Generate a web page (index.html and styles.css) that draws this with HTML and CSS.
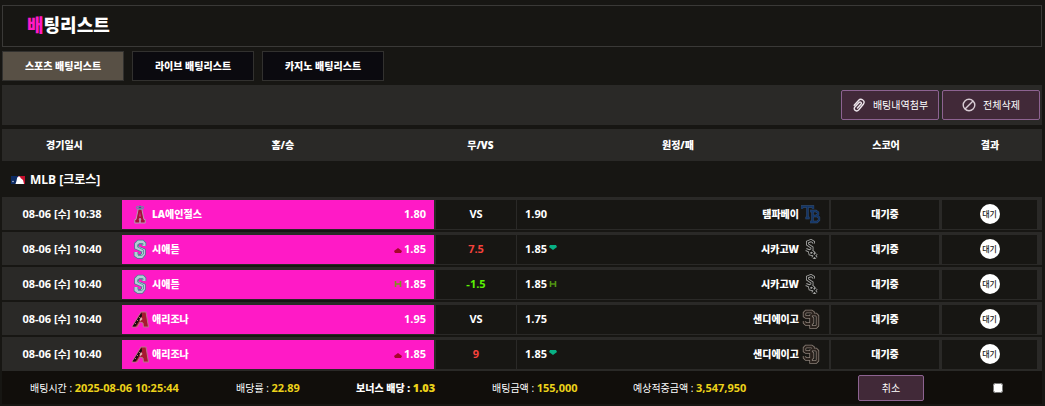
FILE: index.html
```html
<!DOCTYPE html>
<html lang="ko">
<head>
<meta charset="utf-8">
<title>배팅리스트</title>
<link rel="stylesheet" href="styles.css">
</head>
<body>
<svg class="defs" aria-hidden="true">
  <symbol id="angels" viewBox="0 0 20 20">
    <path d="M8.200 5h3.600l2.200 10.500h1.200V19h-5v-3h.6l-.3-1.500h-1L9.200 16h.6v3h-5v-3.500H6z" fill="#a31238" stroke="#b79bb5" stroke-width="1"/>
    <path d="M10 8 9.300 12.500h1.400z" fill="#ff1ac6"/>
    <path d="M8 5 10 1l2 4z" fill="#3f5f80"/>
    <ellipse cx="10" cy="3.600" rx="3.600" ry="1.300" fill="none" stroke="#6d8aa5" stroke-width="1.100"/>
  </symbol>
  <symbol id="mariners" viewBox="0 0 20 20">
    <path d="M14 7V4.500L12.500 3h-4L6.500 5v3.500l7 3V15l-2 2.500H8L6 16v-3" fill="none" stroke="#4a7d92" stroke-width="4.600"/>
    <path d="M14 7V4.500L12.500 3h-4L6.500 5v3.500l7 3V15l-2 2.500H8L6 16v-3" fill="none" stroke="#b4cdd4" stroke-width="3"/>
    <path d="M13 6V4.500h-4L7.500 6v2l6 3V15l-2 1.500H8" fill="none" stroke="#51889a" stroke-width=".8"/>
  </symbol>
  <symbol id="dbacks" viewBox="0 0 20 20">
    <path d="M2 18 11 3h5l2.500 15h-5L13 14l-3-1-3 5z" fill="#a71930" stroke="#b87988" stroke-width="1"/>
    <path d="M2.500 17.500 11.500 3.500 12 7l-6.500 10.500z" fill="#160b12"/>
    <path d="m11 8 1.500 2-2 2-1-1z" fill="#e3b8b5"/>
    <path d="m5 14 1 1m1-4 1 1m1-4 1 1" stroke="#bd6a72" stroke-width="1"/>
  </symbol>
  <symbol id="rays" viewBox="0 0 20 20">
    <path d="M1 5V2.500h11V5M6.500 3v11M4.500 14h4M9 7h6l2 1.500v2L15 12h-4 5l2 1.500v2.500L16 18H9m2.500-11v11" fill="none" stroke="#3b5374" stroke-width="2.300"/>
    <path d="M1 5V2.500h11V5M6.500 3v11M4.500 14h4M9 7h6l2 1.500v2L15 12h-4 5l2 1.500v2.500L16 18H9m2.500-11v11" fill="none" stroke="#123466" stroke-width="1.600"/>
  </symbol>
  <symbol id="whitesox" viewBox="0 0 20 20">
    <path d="M12.500 4.500V3L10 1.500 6.500 3v2.500L11 8.500v2L8.500 12 5 10.500M8.500 13l2.500-1 1.500 1.500-1.500 2-2-.5zM11.500 15l4 4m0-4.500-4 4.500" fill="none" stroke="#a3a3a1" stroke-width="3"/>
    <path d="M12.500 4.500V3L10 1.500 6.500 3v2.500L11 8.500v2L8.500 12 5 10.500M8.500 13l2.500-1 1.500 1.500-1.500 2-2-.5zM11.500 15l4 4m0-4.500-4 4.500" fill="none" stroke="#11110f" stroke-width="1.200"/>
  </symbol>
  <symbol id="padres" viewBox="0 0 20 20">
    <path d="M12 6V3.500L10.500 2.500H5L3.500 4v3L5 8h5l1.500 1.500v4L10 15H5l-1.500-1.500V12M10 5.500h5L16.500 7v9.500L15 18h-5V5.500" fill="none" stroke="#8c8078" stroke-width="3.400"/>
    <path d="M12 6V3.500L10.500 2.500H5L3.500 4v3L5 8h5l1.500 1.500v4L10 15H5l-1.500-1.500V12M10 5.500h5L16.500 7v9.500L15 18h-5V5.500" fill="none" stroke="#29211c" stroke-width="1.800"/>
  </symbol>
</svg>

<main class="page">
  <header class="title-box"><h1 class="title"><span class="accent">배</span>팅리스트</h1></header>

  <nav class="tabs">
    <button type="button" class="tab tab-active">스포츠 배팅리스트</button>
    <button type="button" class="tab">라이브 배팅리스트</button>
    <button type="button" class="tab">카지노 배팅리스트</button>
  </nav>

  <div class="toolbar">
    <button type="button" class="action">
      <svg class="action-icon" viewBox="0 0 14 14"><path d="M2.200 7.200 6.500 2.500C9-.2 13.600 2.600 11.500 6L6.800 11.800C4.700 14.200.9 12 2.700 9.200L7 4.500c1.300-1.200 3 .1 2.100 1.500L5.500 10" fill="none" stroke="#eee6ec" stroke-width="1.400" stroke-linecap="round"/></svg>
      배팅내역첨부
    </button>
    <button type="button" class="action">
      <svg class="action-icon" viewBox="0 0 14 14"><circle cx="7" cy="7" r="5.800" fill="none" stroke="#d8ccd4" stroke-width="1.400"/><path d="m3 11 8-8" stroke="#d8ccd4" stroke-width="1.400"/></svg>
      전체삭제
    </button>
  </div>

  <table class="bets">
    <thead>
      <tr class="head-row"><th>경기일시</th><th>홈/승</th><th>무/VS</th><th>원정/패</th><th>스코어</th><th>결과</th></tr>
    </thead>
    <tbody>
      <tr class="league-row"><th colspan="6" class="league">
        <svg class="league-logo" viewBox="0 0 16 10"><path d="M1 1h8l-2 8H1z" fill="#0c2a62"/><path d="M8 1h7v8h-2z" fill="#c8102e"/><path d="M7 3.500C7.500.8 10.500 1 10.500 3l2.500 2 1 4H5.500l1-3z" fill="#fff"/><circle cx="3" cy="6.500" r=".8" fill="#b9c4d8"/></svg>
        MLB [크로스]</th></tr>
      <tr class="bet-row">
        <td class="date">08-06 [<span class="ko">수</span>] 10:38</td>
        <td class="home"><svg class="logo"><use href="#angels"/></svg><span class="team">LA에인절스</span><span class="odds">1.80</span></td>
        <td class="line">VS</td>
        <td class="away"><span>1.90</span><span class="team">탬파베이</span><svg class="logo"><use href="#rays"/></svg></td>
        <td class="score">대기중</td><td class="result"><span class="badge">대기</span></td>
      </tr>
      <tr class="bet-row">
        <td class="date">08-06 [<span class="ko">수</span>] 10:40</td>
        <td class="home"><svg class="logo"><use href="#mariners"/></svg><span class="team">시애틀</span><svg class="mark" viewBox="0 0 8 8"><path d="m4 3 4 3-1 2H1L0 6z" fill="#a5062b"/></svg><span class="odds">1.85</span></td>
        <td class="line over">7.5</td>
        <td class="away"><span>1.85</span><svg class="mark" viewBox="0 0 8 8"><path d="M1 0h6l1 2-4 3-4-3z" fill="#08b184"/></svg><span class="team">시카고W</span><svg class="logo"><use href="#whitesox"/></svg></td>
        <td class="score">대기중</td><td class="result"><span class="badge">대기</span></td>
      </tr>
      <tr class="bet-row">
        <td class="date">08-06 [<span class="ko">수</span>] 10:40</td>
        <td class="home"><svg class="logo"><use href="#mariners"/></svg><span class="team">시애틀</span><svg class="mark" viewBox="0 0 8 8"><path d="M1.500 1v6M6.500 1v6M2 4h4" stroke="#7b961e" stroke-width="1.600"/></svg><span class="odds">1.85</span></td>
        <td class="line handicap">-1.5</td>
        <td class="away"><span>1.85</span><svg class="mark" viewBox="0 0 8 8"><path d="M1.500 1v6M6.500 1v6M2 4h4" stroke="#519712" stroke-width="1.600"/></svg><span class="team">시카고W</span><svg class="logo"><use href="#whitesox"/></svg></td>
        <td class="score">대기중</td><td class="result"><span class="badge">대기</span></td>
      </tr>
      <tr class="bet-row">
        <td class="date">08-06 [<span class="ko">수</span>] 10:40</td>
        <td class="home"><svg class="logo"><use href="#dbacks"/></svg><span class="team">애리조나</span><span class="odds">1.95</span></td>
        <td class="line">VS</td>
        <td class="away"><span>1.75</span><span class="team">샌디에이고</span><svg class="logo"><use href="#padres"/></svg></td>
        <td class="score">대기중</td><td class="result"><span class="badge">대기</span></td>
      </tr>
      <tr class="bet-row">
        <td class="date">08-06 [<span class="ko">수</span>] 10:40</td>
        <td class="home"><svg class="logo"><use href="#dbacks"/></svg><span class="team">애리조나</span><svg class="mark" viewBox="0 0 8 8"><path d="m4 3 4 3-1 2H1L0 6z" fill="#a5062b"/></svg><span class="odds">1.85</span></td>
        <td class="line over">9</td>
        <td class="away"><span>1.85</span><svg class="mark" viewBox="0 0 8 8"><path d="M1 0h6l1 2-4 3-4-3z" fill="#08b184"/></svg><span class="team">샌디에이고</span><svg class="logo"><use href="#padres"/></svg></td>
        <td class="score">대기중</td><td class="result"><span class="badge">대기</span></td>
      </tr>
    </tbody>
  </table>

  <footer class="summary">
    <span>배팅시간 : <b class="value">2025-08-06 10:25:44</b></span>
    <span>배당률 : <b class="value">22.89</b></span>
    <span class="strong">보너스 배당 : <b class="value">1.03</b></span>
    <span>배팅금액 : <b class="value">155,000</b></span>
    <span>예상적중금액 : <b class="value">3,547,950</b></span>
    <span class="center"><button type="button" class="cancel">취소</button></span>
    <span class="center"><input type="checkbox" class="pick" aria-label="선택"></span>
  </footer>
</main>
</body>
</html>
```
FILE: styles.css
```css
* { box-sizing: border-box; }

body {
  margin: 0;
  background: #171613;
  color: #fff;
  font: 10px/16px "Open Sans", "Noto Sans CJK KR", sans-serif;
}

button { font: inherit; color: inherit; cursor: pointer; }

.defs { display: none; }

.page {
  display: flex;
  flex-direction: column;
  gap: 4px;
  padding: 5px 3px 2px 2px;
}

.title-box {
  border: 1px solid #3a3937;
  padding: 7px 24px 9px;
}

.title {
  margin: 0;
  font-size: 18px;
  line-height: 24px;
  font-weight: 900;
}

.accent { color: #ff1ac6; }

.tabs { display: flex; gap: 8px; }

.tab {
  width: 122px;
  height: 30px;
  padding: 0;
  border: 1px solid #32312f;
  background: #0b0a0f;
  font-weight: 900;
}

.tab-active { background: #585045; }

.toolbar {
  display: flex;
  justify-content: flex-end;
  gap: 3px;
  padding: 5px 2px;
  background: #2a2927;
}

.action, .cancel {
  border: 1px solid #8d6391;
  border-radius: 2px;
  background: #412938;
}

.action {
  display: flex;
  align-items: center;
  justify-content: center;
  gap: 7px;
  width: 98px;
  height: 30px;
  padding: 0;
}

.action-icon { width: 14px; height: 14px; }

.bets { display: block; }

.bets thead, .bets tbody { display: block; }

.bets th, .bets td { padding: 0; }

.head-row {
  display: grid;
  grid-template-columns: 12fr 30fr 8fr 30fr 10fr 10fr;
  padding: 8px 0;
  background: #2a2927;
}

.head-row th { font-weight: 900; }

.league-row { display: block; }

.league {
  display: flex;
  align-items: center;
  gap: 4px;
  height: 36px;
  font-size: 12px;
}

.bets .league { padding: 2px 8px 0; }

.league-logo { width: 16px; height: 10px; }

.bet-row {
  display: grid;
  grid-template-columns: 120fr 314fr 81fr 314fr 111fr 100fr;
  height: 33px;
  margin-bottom: 2px;
  padding: 3px 0 1px;
  background: #2a2927;
}

.bet-row:last-child { margin-bottom: 0; height: 34px; padding-bottom: 2px; }

.bets .bet-row td {
  display: flex;
  align-items: center;
  justify-content: center;
  padding-bottom: 2px;
  background: #171613;
  background-clip: padding-box;
  border: 0 solid #2a2927;
  font-weight: 700;
  font-size: 11px;
}

.bets .bet-row .date { background: #2a2927; }

.ko { font-size: 10px; }

.bets .bet-row .home {
  gap: 2px;
  padding: 0 8px 2px;
  background-color: #ff1ac6;
  border-right-width: 2px;
}

.bets .bet-row .line { border-right-width: 1px; }

.bets .bet-row .away {
  gap: 2px;
  padding: 0 8px 2px;
  border-right-width: 2px;
}

.bets .bet-row .score { border-right-width: 3px; font-size: 10px; font-weight: 900; }

.bets .bet-row .result { border-right-width: 5px; }

.bets .bet-row .over { color: #f5423c; }

.bets .bet-row .handicap { color: #5cf203; }

.team { font-size: 10px; font-weight: 900; }

.home .team { margin-right: auto; }

.away .team { margin-left: auto; }

.logo { width: 20px; height: 20px; flex: none; }

.mark { width: 8px; height: 8px; flex: none; }

.badge {
  width: 20px;
  height: 20px;
  border-radius: 50%;
  background: #fff;
  color: #222;
  font-size: 8px;
  line-height: 19px;
  font-weight: 500;
  text-align: center;
}

.summary {
  display: grid;
  grid-template-columns: 206fr 120fr 136fr 141fr 196fr 124fr 89fr;
  align-items: center;
  height: 33px;
  margin-top: -4px;
  padding-left: 28px;
  background: #110e0b;
  white-space: nowrap;
}

.value { color: #ecd21a; font-size: 11px; }

.strong { font-weight: 900; }

.center { display: flex; justify-content: center; }

.cancel { width: 66px; height: 26px; padding: 0; }

.pick { width: 10px; height: 10px; margin: 0; }
```
